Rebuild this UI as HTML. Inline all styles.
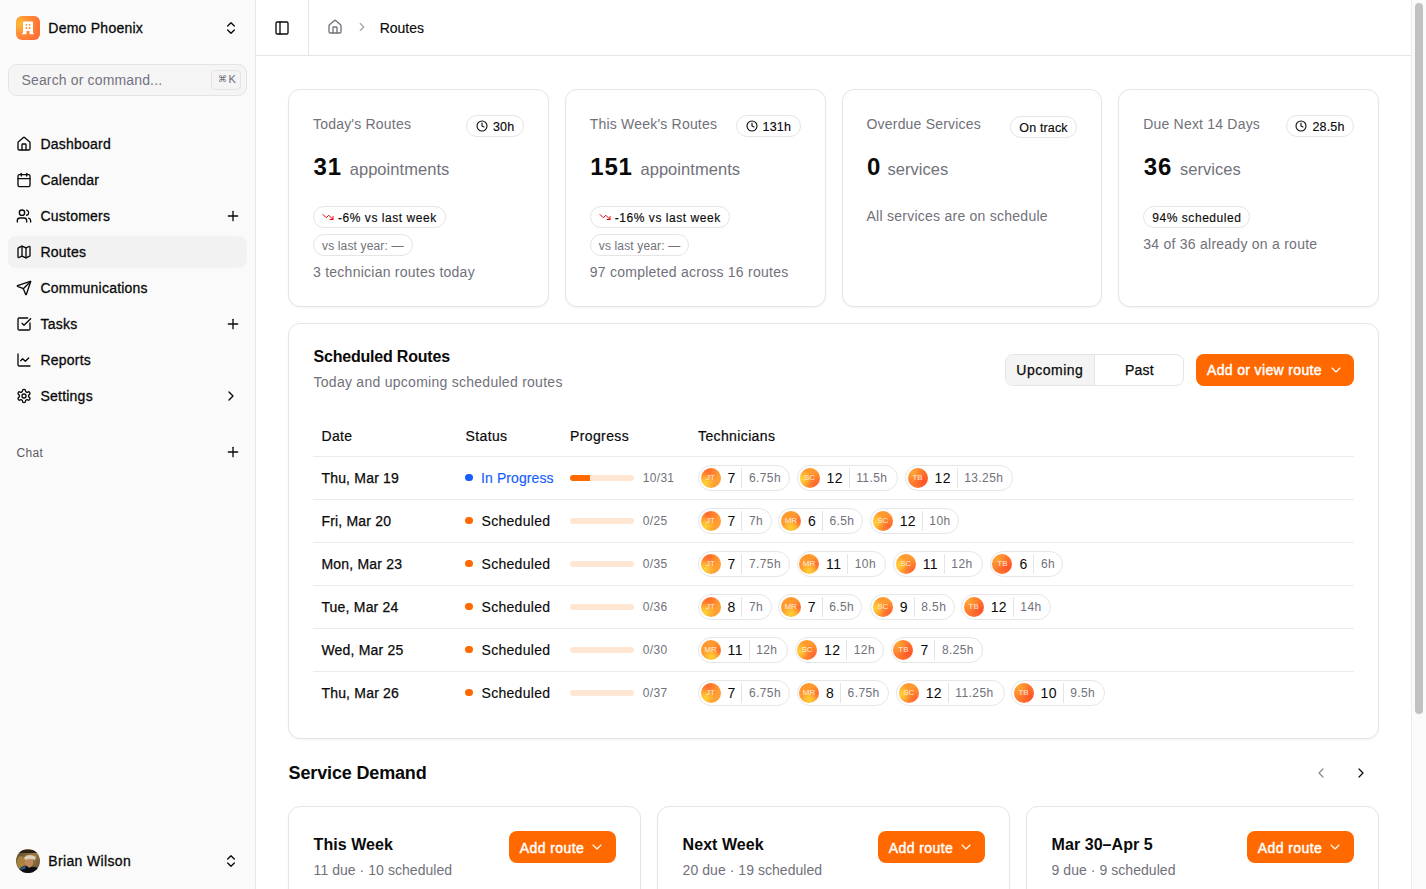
<!DOCTYPE html><html><head><meta charset="utf-8"><style>
*{box-sizing:border-box;margin:0;padding:0}
html,body{width:1426px;height:889px;overflow:hidden;background:#fff}
body{font-family:"Liberation Sans",sans-serif;color:#0a0a0a;position:relative}
.t{position:absolute;white-space:nowrap}
svg.i{position:absolute;fill:none;stroke:currentColor;stroke-linecap:round;stroke-linejoin:round;display:block}
.b{position:absolute}
.card{position:absolute;background:#fff;border:1px solid #e5e5e5;border-radius:12px;box-shadow:0 1px 2px rgba(0,0,0,.05)}
.med{-webkit-text-stroke:0.25px currentColor}
</style></head><body>
<div class="b" style="left:0;top:0;width:256px;height:889px;background:#fafafa;border-right:1px solid #e8e8e8"></div>
<div class="b" style="left:16px;top:16px;width:24px;height:24px;border-radius:6px;background:radial-gradient(circle at 16% 33%,#ffbb34 0%,#ff9236 35%,#ff7236 75%,#ff6a32 100%)"></div>
<svg class="b" style="left:16px;top:16px" width="24" height="24" viewBox="0 0 24 24"><path fill="#fff" d="M8 5.4h8a1 1 0 0 1 1 1V17h.8v1.3h-4.2V16a1.6 1.6 0 0 0-3.2 0v2.3H6.2V17H7V6.4a1 1 0 0 1 1-1z"/><g fill="#ff8c3a"><rect x="9.6" y="7.9" width="1.5" height="1.8" rx=".5"/><rect x="12.8" y="7.9" width="1.5" height="1.8" rx=".5"/><rect x="9.6" y="11.1" width="1.5" height="1.8" rx=".5"/><rect x="12.8" y="11.1" width="1.5" height="1.8" rx=".5"/></g></svg>
<div class="t" style="left:48.30px;top:21.35px;font-size:14px;line-height:14px;font-weight:400;color:#0a0a0a;letter-spacing:0.25px;-webkit-text-stroke:0.3px currentColor">Demo Phoenix</div>
<svg class="i" style="left:223px;top:20px;color:#0a0a0a;" width="16" height="16" viewBox="0 0 24 24" stroke-width="2"><path d="m7 15 5 5 5-5"/><path d="m7 9 5-5 5 5"/></svg>
<div class="b" style="left:8px;top:64px;width:239px;height:32px;border:1px solid #e4e4e7;border-radius:9px;background:#f5f5f5"></div>
<div class="t" style="left:21.50px;top:73.35px;font-size:14px;line-height:14px;font-weight:400;color:#737381;letter-spacing:0.15px;">Search or command...</div>
<div class="b" style="left:211px;top:70px;width:30px;height:20px;border:1px solid #e4e4e7;border-radius:4px;background:#f4f4f5"></div>
<div class="t" style="left:217.60px;top:75.40px;font-size:8.5px;line-height:8.5px;font-weight:400;color:#6b6b78;letter-spacing:0px;">⌘</div>
<div class="t" style="left:228.60px;top:73.69px;font-size:11px;line-height:11px;font-weight:400;color:#6b6b78;letter-spacing:0px;">K</div>
<svg class="i" style="left:16px;top:136px;color:#0a0a0a;" width="16" height="16" viewBox="0 0 24 24" stroke-width="2"><path d="M15 21v-8a1 1 0 0 0-1-1h-4a1 1 0 0 0-1 1v8"/><path d="M3 10a2 2 0 0 1 .709-1.528l7-5.999a2 2 0 0 1 2.582 0l7 5.999A2 2 0 0 1 21 10v9a2 2 0 0 1-2 2H5a2 2 0 0 1-2-2z"/></svg>
<div class="t" style="left:40.50px;top:137.15px;font-size:14px;line-height:14px;font-weight:400;color:#0a0a0a;letter-spacing:0.22px;-webkit-text-stroke:0.3px currentColor">Dashboard</div>
<svg class="i" style="left:16px;top:172px;color:#0a0a0a;" width="16" height="16" viewBox="0 0 24 24" stroke-width="2"><path d="M8 2v4"/><path d="M16 2v4"/><rect width="18" height="18" x="3" y="4" rx="2"/><path d="M3 10h18"/></svg>
<div class="t" style="left:40.50px;top:173.15px;font-size:14px;line-height:14px;font-weight:400;color:#0a0a0a;letter-spacing:0.22px;-webkit-text-stroke:0.3px currentColor">Calendar</div>
<svg class="i" style="left:16px;top:208px;color:#0a0a0a;" width="16" height="16" viewBox="0 0 24 24" stroke-width="2"><path d="M16 21v-2a4 4 0 0 0-4-4H6a4 4 0 0 0-4 4v2"/><circle cx="9" cy="7" r="4"/><path d="M22 21v-2a4 4 0 0 0-3-3.87"/><path d="M16 3.13a4 4 0 0 1 0 7.75"/></svg>
<div class="t" style="left:40.50px;top:209.15px;font-size:14px;line-height:14px;font-weight:400;color:#0a0a0a;letter-spacing:0.22px;-webkit-text-stroke:0.3px currentColor">Customers</div>
<svg class="i" style="left:225px;top:208px;color:#0a0a0a;" width="16" height="16" viewBox="0 0 24 24" stroke-width="2"><path d="M5 12h14"/><path d="M12 5v14"/></svg>
<div class="b" style="left:8px;top:236px;width:239px;height:32px;border-radius:8px;background:#f2f2f2"></div>
<svg class="i" style="left:16px;top:244px;color:#0a0a0a;" width="16" height="16" viewBox="0 0 24 24" stroke-width="2"><path d="M14.106 5.553a2 2 0 0 0 1.788 0l3.659-1.83A1 1 0 0 1 21 4.619v12.764a1 1 0 0 1-.553.894l-4.553 2.277a2 2 0 0 1-1.788 0l-4.212-2.106a2 2 0 0 0-1.788 0l-3.659 1.83A1 1 0 0 1 3 19.381V6.618a1 1 0 0 1 .553-.894l4.553-2.277a2 2 0 0 1 1.788 0z"/><path d="M15 5.764v15"/><path d="M9 3.236v15"/></svg>
<div class="t" style="left:40.50px;top:245.15px;font-size:14px;line-height:14px;font-weight:400;color:#0a0a0a;letter-spacing:0.22px;-webkit-text-stroke:0.3px currentColor">Routes</div>
<svg class="i" style="left:16px;top:280px;color:#0a0a0a;" width="16" height="16" viewBox="0 0 24 24" stroke-width="2"><path d="M14.536 21.686a.5.5 0 0 0 .937-.024l6.5-19a.496.496 0 0 0-.635-.635l-19 6.5a.5.5 0 0 0-.024.937l7.93 3.18a2 2 0 0 1 1.112 1.11z"/><path d="m21.854 2.147-10.94 10.939"/></svg>
<div class="t" style="left:40.50px;top:281.15px;font-size:14px;line-height:14px;font-weight:400;color:#0a0a0a;letter-spacing:0.22px;-webkit-text-stroke:0.3px currentColor">Communications</div>
<svg class="i" style="left:16px;top:316px;color:#0a0a0a;" width="16" height="16" viewBox="0 0 24 24" stroke-width="2"><path d="M21 10.5V19a2 2 0 0 1-2 2H5a2 2 0 0 1-2-2V5a2 2 0 0 1 2-2h12.5"/><path d="m9 11 3 3L22 4"/></svg>
<div class="t" style="left:40.50px;top:317.15px;font-size:14px;line-height:14px;font-weight:400;color:#0a0a0a;letter-spacing:0.22px;-webkit-text-stroke:0.3px currentColor">Tasks</div>
<svg class="i" style="left:225px;top:316px;color:#0a0a0a;" width="16" height="16" viewBox="0 0 24 24" stroke-width="2"><path d="M5 12h14"/><path d="M12 5v14"/></svg>
<svg class="i" style="left:16px;top:352px;color:#0a0a0a;" width="16" height="16" viewBox="0 0 24 24" stroke-width="2"><path d="M3 3v16a2 2 0 0 0 2 2h16"/><path d="m19 9-5 5-4-4-3 3"/></svg>
<div class="t" style="left:40.50px;top:353.15px;font-size:14px;line-height:14px;font-weight:400;color:#0a0a0a;letter-spacing:0.22px;-webkit-text-stroke:0.3px currentColor">Reports</div>
<svg class="i" style="left:16px;top:388px;color:#0a0a0a;" width="16" height="16" viewBox="0 0 24 24" stroke-width="2"><path d="M12.22 2h-.44a2 2 0 0 0-2 2v.18a2 2 0 0 1-1 1.73l-.43.25a2 2 0 0 1-2 0l-.15-.08a2 2 0 0 0-2.73.73l-.22.38a2 2 0 0 0 .73 2.730l.15.1a2 2 0 0 1 1 1.72v.51a2 2 0 0 1-1 1.74l-.15.09a2 2 0 0 0-.73 2.73l.22.38a2 2 0 0 0 2.73.73l.15-.08a2 2 0 0 1 2 0l.43.25a2 2 0 0 1 1 1.73V20a2 2 0 0 0 2 2h.44a2 2 0 0 0 2-2v-.18a2 2 0 0 1 1-1.73l.43-.25a2 2 0 0 1 2 0l.15.08a2 2 0 0 0 2.73-.73l.22-.39a2 2 0 0 0-.73-2.73l-.15-.08a2 2 0 0 1-1-1.74v-.5a2 2 0 0 1 1-1.74l.15-.09a2 2 0 0 0 .73-2.73l-.22-.38a2 2 0 0 0-2.73-.73l-.15.08a2 2 0 0 1-2 0l-.43-.25a2 2 0 0 1-1-1.73V4a2 2 0 0 0-2-2z"/><circle cx="12" cy="12" r="3"/></svg>
<div class="t" style="left:40.50px;top:389.15px;font-size:14px;line-height:14px;font-weight:400;color:#0a0a0a;letter-spacing:0.22px;-webkit-text-stroke:0.3px currentColor">Settings</div>
<svg class="i" style="left:223px;top:388px;color:#0a0a0a;" width="16" height="16" viewBox="0 0 24 24" stroke-width="2"><path d="m9 18 6-6-6-6"/></svg>
<div class="t" style="left:16.50px;top:447.24px;font-size:12px;line-height:12px;font-weight:400;color:#5a5a63;letter-spacing:0.35px;">Chat</div>
<svg class="i" style="left:225px;top:444px;color:#0a0a0a;" width="16" height="16" viewBox="0 0 24 24" stroke-width="2"><path d="M5 12h14"/><path d="M12 5v14"/></svg>
<svg class="b" style="left:16px;top:849px" width="24" height="24" viewBox="0 0 24 24"><defs><clipPath id="av"><circle cx="12" cy="12" r="12"/></clipPath><linearGradient id="avbg" x1="0" y1="0" x2="1" y2="1"><stop offset="0" stop-color="#4a3b24"/><stop offset=".5" stop-color="#9c7a45"/><stop offset="1" stop-color="#5a4a30"/></linearGradient></defs><g clip-path="url(#av)"><rect width="24" height="24" fill="url(#avbg)"/><rect x="0" y="1" width="24" height="3" fill="#2a2418"/><ellipse cx="5" cy="13" rx="4" ry="6" fill="#b08a40" opacity=".8"/><ellipse cx="13" cy="13" rx="4.2" ry="5.2" fill="#c08a5e"/><path d="M8 8.5 Q13 4 20 8 L19 11 Q14 9 9 11z" fill="#ddd0b8"/><path d="M2 22 Q6 16 11 17 L13 19 Q18 16 23 20 L24 24 H0z" fill="#0d0f14"/><path d="M3 21 Q6 17 10 17 L9 20z" fill="#2c5a8a"/></g></svg>
<div class="t" style="left:48.30px;top:854.15px;font-size:14px;line-height:14px;font-weight:400;color:#0a0a0a;letter-spacing:0.35px;-webkit-text-stroke:0.3px currentColor">Brian Wilson</div>
<svg class="i" style="left:223px;top:853px;color:#0a0a0a;" width="16" height="16" viewBox="0 0 24 24" stroke-width="2"><path d="m7 15 5 5 5-5"/><path d="m7 9 5-5 5 5"/></svg>
<div class="b" style="left:256px;top:55px;width:1155px;height:1px;background:#e5e5e5"></div>
<div class="b" style="left:308px;top:0;width:1px;height:55px;background:#e5e5e5"></div>
<svg class="i" style="left:274px;top:19.6px;color:#0a0a0a;" width="16" height="16" viewBox="0 0 24 24" stroke-width="2"><rect width="18" height="18" x="3" y="3" rx="2"/><path d="M9 3v18"/></svg>
<svg class="i" style="left:327px;top:19px;color:#71717a;" width="16" height="16" viewBox="0 0 24 24" stroke-width="2"><path d="M15 21v-8a1 1 0 0 0-1-1h-4a1 1 0 0 0-1 1v8"/><path d="M3 10a2 2 0 0 1 .709-1.528l7-5.999a2 2 0 0 1 2.582 0l7 5.999A2 2 0 0 1 21 10v9a2 2 0 0 1-2 2H5a2 2 0 0 1-2-2z"/></svg>
<svg class="i" style="left:354.5px;top:20.3px;color:#a1a1aa;" width="14" height="14" viewBox="0 0 24 24" stroke-width="2"><path d="m9 18 6-6-6-6"/></svg>
<div class="t" style="left:379.70px;top:21.35px;font-size:14px;line-height:14px;font-weight:400;color:#0a0a0a;letter-spacing:0px;-webkit-text-stroke:0.15px currentColor">Routes</div>
<div class="card" style="left:288.00px;top:89px;width:260.75px;height:218px"></div>
<div class="t" style="left:313.00px;top:116.95px;font-size:14px;line-height:14px;font-weight:400;color:#71717a;letter-spacing:0.2px;">Today's Routes</div>
<div class="b" id="badge0" style="right:902.25px;top:115px;height:22px;border:1px solid #e5e5e5;border-radius:11px;background:#fff;display:flex;align-items:center;padding:0 8.5px;white-space:nowrap;font-size:12.5px;line-height:12px;font-weight:400;color:#0a0a0a;letter-spacing:0.15px"><svg width="12" height="12" viewBox="0 0 24 24" style="fill:none;stroke:#0a0a0a;stroke-width:2.2;stroke-linecap:round;stroke-linejoin:round;margin-right:5px;flex:none"><circle cx="12" cy="12" r="10"/><path d="M12 6v6l4 2"/></svg><span style="-webkit-text-stroke:0.15px #0a0a0a;position:relative;top:1px">30h</span></div>
<div class="t" style="left:313.60px;top:154.88px;font-size:24px;line-height:24px;font-weight:700;color:#0a0a0a;letter-spacing:0.7px;">31</div>
<div class="t" style="left:349.70px;top:161.23px;font-size:16.5px;line-height:16.5px;font-weight:400;color:#71717a;letter-spacing:0.05px;">appointments</div>
<div class="b" style="left:313.00px;top:206px;height:22px;border:1px solid #e5e5e5;border-radius:11px;background:#fff;display:flex;align-items:center;padding:0 8px;white-space:nowrap;font-size:12px;color:#0a0a0a;letter-spacing:0.55px"><svg width="12" height="12" viewBox="0 0 24 24" style="fill:none;stroke:#e7000b;stroke-width:2;stroke-linecap:round;stroke-linejoin:round;margin-right:4px;flex:none"><path d="M16 17h6v-6"/><path d="m22 17-8.5-8.5-5 5L2 7"/></svg><span style="-webkit-text-stroke:0.15px currentColor;position:relative;top:0.8px">-6% vs last week</span></div>
<div class="b" style="left:313.00px;top:234px;height:22px;border:1px solid #e5e5e5;border-radius:11px;background:#fff;display:flex;align-items:center;padding:0 8px;white-space:nowrap;font-size:12px;color:#71717a;letter-spacing:0.15px"><span style=";position:relative;top:0.8px">vs last year: —</span></div>
<div class="t" style="left:313.00px;top:264.85px;font-size:14px;line-height:14px;font-weight:400;color:#71717a;letter-spacing:0.25px;">3 technician routes today</div>
<div class="card" style="left:564.75px;top:89px;width:260.75px;height:218px"></div>
<div class="t" style="left:589.75px;top:116.95px;font-size:14px;line-height:14px;font-weight:400;color:#71717a;letter-spacing:0.2px;">This Week's Routes</div>
<div class="b" id="badge1" style="right:625.50px;top:115px;height:22px;border:1px solid #e5e5e5;border-radius:11px;background:#fff;display:flex;align-items:center;padding:0 8.5px;white-space:nowrap;font-size:12.5px;line-height:12px;font-weight:400;color:#0a0a0a;letter-spacing:0.15px"><svg width="12" height="12" viewBox="0 0 24 24" style="fill:none;stroke:#0a0a0a;stroke-width:2.2;stroke-linecap:round;stroke-linejoin:round;margin-right:5px;flex:none"><circle cx="12" cy="12" r="10"/><path d="M12 6v6l4 2"/></svg><span style="-webkit-text-stroke:0.15px #0a0a0a;position:relative;top:1px">131h</span></div>
<div class="t" style="left:590.35px;top:154.88px;font-size:24px;line-height:24px;font-weight:700;color:#0a0a0a;letter-spacing:0.7px;">151</div>
<div class="t" style="left:640.45px;top:161.23px;font-size:16.5px;line-height:16.5px;font-weight:400;color:#71717a;letter-spacing:0.05px;">appointments</div>
<div class="b" style="left:589.75px;top:206px;height:22px;border:1px solid #e5e5e5;border-radius:11px;background:#fff;display:flex;align-items:center;padding:0 8px;white-space:nowrap;font-size:12px;color:#0a0a0a;letter-spacing:0.55px"><svg width="12" height="12" viewBox="0 0 24 24" style="fill:none;stroke:#e7000b;stroke-width:2;stroke-linecap:round;stroke-linejoin:round;margin-right:4px;flex:none"><path d="M16 17h6v-6"/><path d="m22 17-8.5-8.5-5 5L2 7"/></svg><span style="-webkit-text-stroke:0.15px currentColor;position:relative;top:0.8px">-16% vs last week</span></div>
<div class="b" style="left:589.75px;top:234px;height:22px;border:1px solid #e5e5e5;border-radius:11px;background:#fff;display:flex;align-items:center;padding:0 8px;white-space:nowrap;font-size:12px;color:#71717a;letter-spacing:0.15px"><span style=";position:relative;top:0.8px">vs last year: —</span></div>
<div class="t" style="left:589.75px;top:264.85px;font-size:14px;line-height:14px;font-weight:400;color:#71717a;letter-spacing:0.25px;">97 completed across 16 routes</div>
<div class="card" style="left:841.50px;top:89px;width:260.75px;height:218px"></div>
<div class="t" style="left:866.50px;top:116.95px;font-size:14px;line-height:14px;font-weight:400;color:#71717a;letter-spacing:0.2px;">Overdue Services</div>
<div class="b" id="badge2" style="right:348.75px;top:116px;height:22px;border:1px solid #e5e5e5;border-radius:11px;background:#fff;display:flex;align-items:center;padding:0 8.5px;white-space:nowrap;font-size:12.5px;line-height:12px;font-weight:400;color:#0a0a0a;letter-spacing:0.15px"><span style="-webkit-text-stroke:0.15px #0a0a0a;position:relative;top:1px">On track</span></div>
<div class="t" style="left:867.10px;top:154.88px;font-size:24px;line-height:24px;font-weight:700;color:#0a0a0a;letter-spacing:0.7px;">0</div>
<div class="t" style="left:887.40px;top:161.23px;font-size:16.5px;line-height:16.5px;font-weight:400;color:#71717a;letter-spacing:0.05px;">services</div>
<div class="t" style="left:866.50px;top:208.75px;font-size:14px;line-height:14px;font-weight:400;color:#71717a;letter-spacing:0.25px;">All services are on schedule</div>
<div class="card" style="left:1118.25px;top:89px;width:260.75px;height:218px"></div>
<div class="t" style="left:1143.25px;top:116.95px;font-size:14px;line-height:14px;font-weight:400;color:#71717a;letter-spacing:0.2px;">Due Next 14 Days</div>
<div class="b" id="badge3" style="right:72.00px;top:115px;height:22px;border:1px solid #e5e5e5;border-radius:11px;background:#fff;display:flex;align-items:center;padding:0 8.5px;white-space:nowrap;font-size:12.5px;line-height:12px;font-weight:400;color:#0a0a0a;letter-spacing:0.15px"><svg width="12" height="12" viewBox="0 0 24 24" style="fill:none;stroke:#0a0a0a;stroke-width:2.2;stroke-linecap:round;stroke-linejoin:round;margin-right:5px;flex:none"><circle cx="12" cy="12" r="10"/><path d="M12 6v6l4 2"/></svg><span style="-webkit-text-stroke:0.15px #0a0a0a;position:relative;top:1px">28.5h</span></div>
<div class="t" style="left:1143.85px;top:154.88px;font-size:24px;line-height:24px;font-weight:700;color:#0a0a0a;letter-spacing:0.7px;">36</div>
<div class="t" style="left:1179.95px;top:161.23px;font-size:16.5px;line-height:16.5px;font-weight:400;color:#71717a;letter-spacing:0.05px;">services</div>
<div class="b" style="left:1143.25px;top:206px;height:22px;border:1px solid #e5e5e5;border-radius:11px;background:#fff;display:flex;align-items:center;padding:0 8px;white-space:nowrap;font-size:12px;color:#0a0a0a;letter-spacing:0.55px"><span style="-webkit-text-stroke:0.15px currentColor;position:relative;top:0.8px">94% scheduled</span></div>
<div class="t" style="left:1143.25px;top:237.15px;font-size:14px;line-height:14px;font-weight:400;color:#71717a;letter-spacing:0.25px;">34 of 36 already on a route</div>
<div class="card" style="left:288px;top:323px;width:1091px;height:416px"></div>
<div class="t" style="left:313.50px;top:348.86px;font-size:16px;line-height:16px;font-weight:700;color:#0a0a0a;letter-spacing:-0.2px;">Scheduled Routes</div>
<div class="t" style="left:313.50px;top:375.25px;font-size:14px;line-height:14px;font-weight:400;color:#71717a;letter-spacing:0.27px;">Today and upcoming scheduled routes</div>
<div class="b" style="left:1005px;top:354px;width:179px;height:32px;border:1px solid #e5e5e5;border-radius:8px;background:#fff;overflow:hidden"><div style="position:absolute;left:0;top:0;width:89px;height:30px;background:#f4f4f4;border-right:1px solid #e5e5e5"></div></div>
<div class="t" style="left:1016.30px;top:363.15px;font-size:14px;line-height:14px;font-weight:400;color:#0a0a0a;letter-spacing:0.5px;-webkit-text-stroke:0.25px #0a0a0a">Upcoming</div>
<div class="t" style="left:1125.00px;top:363.15px;font-size:14px;line-height:14px;font-weight:400;color:#0a0a0a;letter-spacing:0.25px;-webkit-text-stroke:0.25px #0a0a0a">Past</div>
<div class="b" style="left:1196px;top:354px;width:158px;height:32px;border-radius:8px;background:#ff6900"></div>
<div class="t" style="left:1207.00px;top:363.15px;font-size:14px;line-height:14px;font-weight:400;color:#fff;letter-spacing:0.35px;-webkit-text-stroke:0.45px #fff">Add or view route</div>
<svg class="i" style="left:1328px;top:362px;color:#fff;" width="16" height="16" viewBox="0 0 24 24" stroke-width="1.6"><path d="m6 9 6 6 6-6"/></svg>
<div class="t" style="left:321.40px;top:429.15px;font-size:14px;line-height:14px;font-weight:400;color:#0a0a0a;letter-spacing:0.38px;-webkit-text-stroke:0.2px #0a0a0a">Date</div>
<div class="t" style="left:465.50px;top:429.15px;font-size:14px;line-height:14px;font-weight:400;color:#0a0a0a;letter-spacing:0.38px;-webkit-text-stroke:0.2px #0a0a0a">Status</div>
<div class="t" style="left:570.00px;top:429.15px;font-size:14px;line-height:14px;font-weight:400;color:#0a0a0a;letter-spacing:0.38px;-webkit-text-stroke:0.2px #0a0a0a">Progress</div>
<div class="t" style="left:698.00px;top:429.15px;font-size:14px;line-height:14px;font-weight:400;color:#0a0a0a;letter-spacing:0.38px;-webkit-text-stroke:0.2px #0a0a0a">Technicians</div>
<div class="b" style="left:313px;top:456px;width:1041px;height:1px;background:#ebebeb"></div>
<div class="t" style="left:321.40px;top:471.15px;font-size:14px;line-height:14px;font-weight:400;color:#0a0a0a;letter-spacing:0.2px;-webkit-text-stroke:0.25px #0a0a0a">Thu, Mar 19</div>
<div class="b" style="left:465px;top:473.65px;width:7.5px;height:7.5px;border-radius:50%;background:#155dfc"></div>
<div class="t" style="left:481.10px;top:471.15px;font-size:14px;line-height:14px;font-weight:400;color:#155dfc;letter-spacing:0.08px;-webkit-text-stroke:0.15px currentColor">In Progress</div>
<div class="b" style="left:569.5px;top:474.60px;width:64px;height:6px;border-radius:3px;background:#ffe6d2;overflow:hidden"><div style="width:20.65px;height:6px;background:#ff6900"></div></div>
<div class="t" style="left:642.80px;top:472.34px;font-size:12px;line-height:12px;font-weight:400;color:#71717a;letter-spacing:0.3px;">10/31</div>
<div class="b" style="left:698.0px;top:464.80px;width:92.0px;height:26px;border:1px solid #e6e6e6;border-radius:13px;background:#fff;display:flex;align-items:center;padding:0 0 0 1.5px;white-space:nowrap"><div style="width:20px;height:20px;border-radius:50%;background:radial-gradient(circle at 22% 75%,#ffd234 0%,rgba(255,210,52,0) 45%),radial-gradient(circle at 35% 12%,#ff6a2c 0%,rgba(255,106,44,0) 55%),#ff9e32;color:rgba(255,255,255,.85);font-size:8px;line-height:20px;text-align:center;flex:none">JT</div><span style="margin-left:7px;font-size:14px;line-height:14px;color:#0a0a0a;letter-spacing:0.4px">7</span><span style="margin:0 6.5px 0 5.8px;width:1px;height:20px;background:#e5e5e5;flex:none"></span><span style="font-size:12px;line-height:12px;color:#71717a;letter-spacing:0.4px">6.75h</span></div>
<div class="b" style="left:797.0px;top:464.80px;width:100.7px;height:26px;border:1px solid #e6e6e6;border-radius:13px;background:#fff;display:flex;align-items:center;padding:0 0 0 1.5px;white-space:nowrap"><div style="width:20px;height:20px;border-radius:50%;background:radial-gradient(circle at 12% 55%,#ffd234 0%,rgba(255,210,52,0) 45%),radial-gradient(circle at 88% 82%,#ff6030 0%,rgba(255,96,48,0) 55%),#ff9a2e;color:rgba(255,255,255,.85);font-size:8px;line-height:20px;text-align:center;flex:none">SC</div><span style="margin-left:7px;font-size:14px;line-height:14px;color:#0a0a0a;letter-spacing:0.4px">12</span><span style="margin:0 6.5px 0 5.8px;width:1px;height:20px;background:#e5e5e5;flex:none"></span><span style="font-size:12px;line-height:12px;color:#71717a;letter-spacing:0.4px">11.5h</span></div>
<div class="b" style="left:905.0px;top:464.80px;width:108.0px;height:26px;border:1px solid #e6e6e6;border-radius:13px;background:#fff;display:flex;align-items:center;padding:0 0 0 1.5px;white-space:nowrap"><div style="width:20px;height:20px;border-radius:50%;background:radial-gradient(circle at 22% 22%,#ffa634 0%,rgba(255,166,52,0) 50%),radial-gradient(circle at 85% 70%,#ff5228 0%,rgba(255,82,40,0) 55%),#ff7a2e;color:rgba(255,255,255,.85);font-size:8px;line-height:20px;text-align:center;flex:none">TB</div><span style="margin-left:7px;font-size:14px;line-height:14px;color:#0a0a0a;letter-spacing:0.4px">12</span><span style="margin:0 6.5px 0 5.8px;width:1px;height:20px;background:#e5e5e5;flex:none"></span><span style="font-size:12px;line-height:12px;color:#71717a;letter-spacing:0.4px">13.25h</span></div>
<div class="b" style="left:313px;top:499px;width:1041px;height:1px;background:#ebebeb"></div>
<div class="t" style="left:321.40px;top:514.15px;font-size:14px;line-height:14px;font-weight:400;color:#0a0a0a;letter-spacing:0.2px;-webkit-text-stroke:0.25px #0a0a0a">Fri, Mar 20</div>
<div class="b" style="left:465px;top:516.65px;width:7.5px;height:7.5px;border-radius:50%;background:#ff6900"></div>
<div class="t" style="left:481.50px;top:514.15px;font-size:14px;line-height:14px;font-weight:400;color:#0a0a0a;letter-spacing:0.3px;-webkit-text-stroke:0.15px #0a0a0a">Scheduled</div>
<div class="b" style="left:569.5px;top:517.60px;width:64px;height:6px;border-radius:3px;background:#ffe6d2;overflow:hidden"><div style="width:0.00px;height:6px;background:#ff6900"></div></div>
<div class="t" style="left:642.80px;top:515.34px;font-size:12px;line-height:12px;font-weight:400;color:#71717a;letter-spacing:0.3px;">0/25</div>
<div class="b" style="left:698.0px;top:507.80px;width:73.5px;height:26px;border:1px solid #e6e6e6;border-radius:13px;background:#fff;display:flex;align-items:center;padding:0 0 0 1.5px;white-space:nowrap"><div style="width:20px;height:20px;border-radius:50%;background:radial-gradient(circle at 22% 75%,#ffd234 0%,rgba(255,210,52,0) 45%),radial-gradient(circle at 35% 12%,#ff6a2c 0%,rgba(255,106,44,0) 55%),#ff9e32;color:rgba(255,255,255,.85);font-size:8px;line-height:20px;text-align:center;flex:none">JT</div><span style="margin-left:7px;font-size:14px;line-height:14px;color:#0a0a0a;letter-spacing:0.4px">7</span><span style="margin:0 6.5px 0 5.8px;width:1px;height:20px;background:#e5e5e5;flex:none"></span><span style="font-size:12px;line-height:12px;color:#71717a;letter-spacing:0.4px">7h</span></div>
<div class="b" style="left:778.4px;top:507.80px;width:84.4px;height:26px;border:1px solid #e6e6e6;border-radius:13px;background:#fff;display:flex;align-items:center;padding:0 0 0 1.5px;white-space:nowrap"><div style="width:20px;height:20px;border-radius:50%;background:radial-gradient(circle at 50% 85%,#ffd234 0%,rgba(255,210,52,0) 45%),radial-gradient(circle at 92% 50%,#ff6e30 0%,rgba(255,110,48,0) 40%),#ff9a2e;color:rgba(255,255,255,.85);font-size:8px;line-height:20px;text-align:center;flex:none">MR</div><span style="margin-left:7px;font-size:14px;line-height:14px;color:#0a0a0a;letter-spacing:0.4px">6</span><span style="margin:0 6.5px 0 5.8px;width:1px;height:20px;background:#e5e5e5;flex:none"></span><span style="font-size:12px;line-height:12px;color:#71717a;letter-spacing:0.4px">6.5h</span></div>
<div class="b" style="left:870.2px;top:507.80px;width:89.2px;height:26px;border:1px solid #e6e6e6;border-radius:13px;background:#fff;display:flex;align-items:center;padding:0 0 0 1.5px;white-space:nowrap"><div style="width:20px;height:20px;border-radius:50%;background:radial-gradient(circle at 12% 55%,#ffd234 0%,rgba(255,210,52,0) 45%),radial-gradient(circle at 88% 82%,#ff6030 0%,rgba(255,96,48,0) 55%),#ff9a2e;color:rgba(255,255,255,.85);font-size:8px;line-height:20px;text-align:center;flex:none">SC</div><span style="margin-left:7px;font-size:14px;line-height:14px;color:#0a0a0a;letter-spacing:0.4px">12</span><span style="margin:0 6.5px 0 5.8px;width:1px;height:20px;background:#e5e5e5;flex:none"></span><span style="font-size:12px;line-height:12px;color:#71717a;letter-spacing:0.4px">10h</span></div>
<div class="b" style="left:313px;top:542px;width:1041px;height:1px;background:#ebebeb"></div>
<div class="t" style="left:321.40px;top:557.15px;font-size:14px;line-height:14px;font-weight:400;color:#0a0a0a;letter-spacing:0.2px;-webkit-text-stroke:0.25px #0a0a0a">Mon, Mar 23</div>
<div class="b" style="left:465px;top:559.65px;width:7.5px;height:7.5px;border-radius:50%;background:#ff6900"></div>
<div class="t" style="left:481.50px;top:557.15px;font-size:14px;line-height:14px;font-weight:400;color:#0a0a0a;letter-spacing:0.3px;-webkit-text-stroke:0.15px #0a0a0a">Scheduled</div>
<div class="b" style="left:569.5px;top:560.60px;width:64px;height:6px;border-radius:3px;background:#ffe6d2;overflow:hidden"><div style="width:0.00px;height:6px;background:#ff6900"></div></div>
<div class="t" style="left:642.80px;top:558.34px;font-size:12px;line-height:12px;font-weight:400;color:#71717a;letter-spacing:0.3px;">0/35</div>
<div class="b" style="left:698.0px;top:550.80px;width:92.1px;height:26px;border:1px solid #e6e6e6;border-radius:13px;background:#fff;display:flex;align-items:center;padding:0 0 0 1.5px;white-space:nowrap"><div style="width:20px;height:20px;border-radius:50%;background:radial-gradient(circle at 22% 75%,#ffd234 0%,rgba(255,210,52,0) 45%),radial-gradient(circle at 35% 12%,#ff6a2c 0%,rgba(255,106,44,0) 55%),#ff9e32;color:rgba(255,255,255,.85);font-size:8px;line-height:20px;text-align:center;flex:none">JT</div><span style="margin-left:7px;font-size:14px;line-height:14px;color:#0a0a0a;letter-spacing:0.4px">7</span><span style="margin:0 6.5px 0 5.8px;width:1px;height:20px;background:#e5e5e5;flex:none"></span><span style="font-size:12px;line-height:12px;color:#71717a;letter-spacing:0.4px">7.75h</span></div>
<div class="b" style="left:796.6px;top:550.80px;width:89.9px;height:26px;border:1px solid #e6e6e6;border-radius:13px;background:#fff;display:flex;align-items:center;padding:0 0 0 1.5px;white-space:nowrap"><div style="width:20px;height:20px;border-radius:50%;background:radial-gradient(circle at 50% 85%,#ffd234 0%,rgba(255,210,52,0) 45%),radial-gradient(circle at 92% 50%,#ff6e30 0%,rgba(255,110,48,0) 40%),#ff9a2e;color:rgba(255,255,255,.85);font-size:8px;line-height:20px;text-align:center;flex:none">MR</div><span style="margin-left:7px;font-size:14px;line-height:14px;color:#0a0a0a;letter-spacing:0.4px">11</span><span style="margin:0 6.5px 0 5.8px;width:1px;height:20px;background:#e5e5e5;flex:none"></span><span style="font-size:12px;line-height:12px;color:#71717a;letter-spacing:0.4px">10h</span></div>
<div class="b" style="left:893.2px;top:550.80px;width:89.8px;height:26px;border:1px solid #e6e6e6;border-radius:13px;background:#fff;display:flex;align-items:center;padding:0 0 0 1.5px;white-space:nowrap"><div style="width:20px;height:20px;border-radius:50%;background:radial-gradient(circle at 12% 55%,#ffd234 0%,rgba(255,210,52,0) 45%),radial-gradient(circle at 88% 82%,#ff6030 0%,rgba(255,96,48,0) 55%),#ff9a2e;color:rgba(255,255,255,.85);font-size:8px;line-height:20px;text-align:center;flex:none">SC</div><span style="margin-left:7px;font-size:14px;line-height:14px;color:#0a0a0a;letter-spacing:0.4px">11</span><span style="margin:0 6.5px 0 5.8px;width:1px;height:20px;background:#e5e5e5;flex:none"></span><span style="font-size:12px;line-height:12px;color:#71717a;letter-spacing:0.4px">12h</span></div>
<div class="b" style="left:989.9px;top:550.80px;width:73.6px;height:26px;border:1px solid #e6e6e6;border-radius:13px;background:#fff;display:flex;align-items:center;padding:0 0 0 1.5px;white-space:nowrap"><div style="width:20px;height:20px;border-radius:50%;background:radial-gradient(circle at 22% 22%,#ffa634 0%,rgba(255,166,52,0) 50%),radial-gradient(circle at 85% 70%,#ff5228 0%,rgba(255,82,40,0) 55%),#ff7a2e;color:rgba(255,255,255,.85);font-size:8px;line-height:20px;text-align:center;flex:none">TB</div><span style="margin-left:7px;font-size:14px;line-height:14px;color:#0a0a0a;letter-spacing:0.4px">6</span><span style="margin:0 6.5px 0 5.8px;width:1px;height:20px;background:#e5e5e5;flex:none"></span><span style="font-size:12px;line-height:12px;color:#71717a;letter-spacing:0.4px">6h</span></div>
<div class="b" style="left:313px;top:585px;width:1041px;height:1px;background:#ebebeb"></div>
<div class="t" style="left:321.40px;top:600.15px;font-size:14px;line-height:14px;font-weight:400;color:#0a0a0a;letter-spacing:0.2px;-webkit-text-stroke:0.25px #0a0a0a">Tue, Mar 24</div>
<div class="b" style="left:465px;top:602.65px;width:7.5px;height:7.5px;border-radius:50%;background:#ff6900"></div>
<div class="t" style="left:481.50px;top:600.15px;font-size:14px;line-height:14px;font-weight:400;color:#0a0a0a;letter-spacing:0.3px;-webkit-text-stroke:0.15px #0a0a0a">Scheduled</div>
<div class="b" style="left:569.5px;top:603.60px;width:64px;height:6px;border-radius:3px;background:#ffe6d2;overflow:hidden"><div style="width:0.00px;height:6px;background:#ff6900"></div></div>
<div class="t" style="left:642.80px;top:601.34px;font-size:12px;line-height:12px;font-weight:400;color:#71717a;letter-spacing:0.3px;">0/36</div>
<div class="b" style="left:698.0px;top:593.80px;width:73.7px;height:26px;border:1px solid #e6e6e6;border-radius:13px;background:#fff;display:flex;align-items:center;padding:0 0 0 1.5px;white-space:nowrap"><div style="width:20px;height:20px;border-radius:50%;background:radial-gradient(circle at 22% 75%,#ffd234 0%,rgba(255,210,52,0) 45%),radial-gradient(circle at 35% 12%,#ff6a2c 0%,rgba(255,106,44,0) 55%),#ff9e32;color:rgba(255,255,255,.85);font-size:8px;line-height:20px;text-align:center;flex:none">JT</div><span style="margin-left:7px;font-size:14px;line-height:14px;color:#0a0a0a;letter-spacing:0.4px">8</span><span style="margin:0 6.5px 0 5.8px;width:1px;height:20px;background:#e5e5e5;flex:none"></span><span style="font-size:12px;line-height:12px;color:#71717a;letter-spacing:0.4px">7h</span></div>
<div class="b" style="left:778.2px;top:593.80px;width:84.3px;height:26px;border:1px solid #e6e6e6;border-radius:13px;background:#fff;display:flex;align-items:center;padding:0 0 0 1.5px;white-space:nowrap"><div style="width:20px;height:20px;border-radius:50%;background:radial-gradient(circle at 50% 85%,#ffd234 0%,rgba(255,210,52,0) 45%),radial-gradient(circle at 92% 50%,#ff6e30 0%,rgba(255,110,48,0) 40%),#ff9a2e;color:rgba(255,255,255,.85);font-size:8px;line-height:20px;text-align:center;flex:none">MR</div><span style="margin-left:7px;font-size:14px;line-height:14px;color:#0a0a0a;letter-spacing:0.4px">7</span><span style="margin:0 6.5px 0 5.8px;width:1px;height:20px;background:#e5e5e5;flex:none"></span><span style="font-size:12px;line-height:12px;color:#71717a;letter-spacing:0.4px">6.5h</span></div>
<div class="b" style="left:870.3px;top:593.80px;width:84.4px;height:26px;border:1px solid #e6e6e6;border-radius:13px;background:#fff;display:flex;align-items:center;padding:0 0 0 1.5px;white-space:nowrap"><div style="width:20px;height:20px;border-radius:50%;background:radial-gradient(circle at 12% 55%,#ffd234 0%,rgba(255,210,52,0) 45%),radial-gradient(circle at 88% 82%,#ff6030 0%,rgba(255,96,48,0) 55%),#ff9a2e;color:rgba(255,255,255,.85);font-size:8px;line-height:20px;text-align:center;flex:none">SC</div><span style="margin-left:7px;font-size:14px;line-height:14px;color:#0a0a0a;letter-spacing:0.4px">9</span><span style="margin:0 6.5px 0 5.8px;width:1px;height:20px;background:#e5e5e5;flex:none"></span><span style="font-size:12px;line-height:12px;color:#71717a;letter-spacing:0.4px">8.5h</span></div>
<div class="b" style="left:961.2px;top:593.80px;width:90.0px;height:26px;border:1px solid #e6e6e6;border-radius:13px;background:#fff;display:flex;align-items:center;padding:0 0 0 1.5px;white-space:nowrap"><div style="width:20px;height:20px;border-radius:50%;background:radial-gradient(circle at 22% 22%,#ffa634 0%,rgba(255,166,52,0) 50%),radial-gradient(circle at 85% 70%,#ff5228 0%,rgba(255,82,40,0) 55%),#ff7a2e;color:rgba(255,255,255,.85);font-size:8px;line-height:20px;text-align:center;flex:none">TB</div><span style="margin-left:7px;font-size:14px;line-height:14px;color:#0a0a0a;letter-spacing:0.4px">12</span><span style="margin:0 6.5px 0 5.8px;width:1px;height:20px;background:#e5e5e5;flex:none"></span><span style="font-size:12px;line-height:12px;color:#71717a;letter-spacing:0.4px">14h</span></div>
<div class="b" style="left:313px;top:628px;width:1041px;height:1px;background:#ebebeb"></div>
<div class="t" style="left:321.40px;top:643.15px;font-size:14px;line-height:14px;font-weight:400;color:#0a0a0a;letter-spacing:0.2px;-webkit-text-stroke:0.25px #0a0a0a">Wed, Mar 25</div>
<div class="b" style="left:465px;top:645.65px;width:7.5px;height:7.5px;border-radius:50%;background:#ff6900"></div>
<div class="t" style="left:481.50px;top:643.15px;font-size:14px;line-height:14px;font-weight:400;color:#0a0a0a;letter-spacing:0.3px;-webkit-text-stroke:0.15px #0a0a0a">Scheduled</div>
<div class="b" style="left:569.5px;top:646.60px;width:64px;height:6px;border-radius:3px;background:#ffe6d2;overflow:hidden"><div style="width:0.00px;height:6px;background:#ff6900"></div></div>
<div class="t" style="left:642.80px;top:644.34px;font-size:12px;line-height:12px;font-weight:400;color:#71717a;letter-spacing:0.3px;">0/30</div>
<div class="b" style="left:698.0px;top:636.80px;width:89.8px;height:26px;border:1px solid #e6e6e6;border-radius:13px;background:#fff;display:flex;align-items:center;padding:0 0 0 1.5px;white-space:nowrap"><div style="width:20px;height:20px;border-radius:50%;background:radial-gradient(circle at 50% 85%,#ffd234 0%,rgba(255,210,52,0) 45%),radial-gradient(circle at 92% 50%,#ff6e30 0%,rgba(255,110,48,0) 40%),#ff9a2e;color:rgba(255,255,255,.85);font-size:8px;line-height:20px;text-align:center;flex:none">MR</div><span style="margin-left:7px;font-size:14px;line-height:14px;color:#0a0a0a;letter-spacing:0.4px">11</span><span style="margin:0 6.5px 0 5.8px;width:1px;height:20px;background:#e5e5e5;flex:none"></span><span style="font-size:12px;line-height:12px;color:#71717a;letter-spacing:0.4px">12h</span></div>
<div class="b" style="left:794.6px;top:636.80px;width:89.8px;height:26px;border:1px solid #e6e6e6;border-radius:13px;background:#fff;display:flex;align-items:center;padding:0 0 0 1.5px;white-space:nowrap"><div style="width:20px;height:20px;border-radius:50%;background:radial-gradient(circle at 12% 55%,#ffd234 0%,rgba(255,210,52,0) 45%),radial-gradient(circle at 88% 82%,#ff6030 0%,rgba(255,96,48,0) 55%),#ff9a2e;color:rgba(255,255,255,.85);font-size:8px;line-height:20px;text-align:center;flex:none">SC</div><span style="margin-left:7px;font-size:14px;line-height:14px;color:#0a0a0a;letter-spacing:0.4px">12</span><span style="margin:0 6.5px 0 5.8px;width:1px;height:20px;background:#e5e5e5;flex:none"></span><span style="font-size:12px;line-height:12px;color:#71717a;letter-spacing:0.4px">12h</span></div>
<div class="b" style="left:890.9px;top:636.80px;width:92.2px;height:26px;border:1px solid #e6e6e6;border-radius:13px;background:#fff;display:flex;align-items:center;padding:0 0 0 1.5px;white-space:nowrap"><div style="width:20px;height:20px;border-radius:50%;background:radial-gradient(circle at 22% 22%,#ffa634 0%,rgba(255,166,52,0) 50%),radial-gradient(circle at 85% 70%,#ff5228 0%,rgba(255,82,40,0) 55%),#ff7a2e;color:rgba(255,255,255,.85);font-size:8px;line-height:20px;text-align:center;flex:none">TB</div><span style="margin-left:7px;font-size:14px;line-height:14px;color:#0a0a0a;letter-spacing:0.4px">7</span><span style="margin:0 6.5px 0 5.8px;width:1px;height:20px;background:#e5e5e5;flex:none"></span><span style="font-size:12px;line-height:12px;color:#71717a;letter-spacing:0.4px">8.25h</span></div>
<div class="b" style="left:313px;top:671px;width:1041px;height:1px;background:#ebebeb"></div>
<div class="t" style="left:321.40px;top:686.15px;font-size:14px;line-height:14px;font-weight:400;color:#0a0a0a;letter-spacing:0.2px;-webkit-text-stroke:0.25px #0a0a0a">Thu, Mar 26</div>
<div class="b" style="left:465px;top:688.65px;width:7.5px;height:7.5px;border-radius:50%;background:#ff6900"></div>
<div class="t" style="left:481.50px;top:686.15px;font-size:14px;line-height:14px;font-weight:400;color:#0a0a0a;letter-spacing:0.3px;-webkit-text-stroke:0.15px #0a0a0a">Scheduled</div>
<div class="b" style="left:569.5px;top:689.60px;width:64px;height:6px;border-radius:3px;background:#ffe6d2;overflow:hidden"><div style="width:0.00px;height:6px;background:#ff6900"></div></div>
<div class="t" style="left:642.80px;top:687.34px;font-size:12px;line-height:12px;font-weight:400;color:#71717a;letter-spacing:0.3px;">0/37</div>
<div class="b" style="left:698.0px;top:679.80px;width:92.1px;height:26px;border:1px solid #e6e6e6;border-radius:13px;background:#fff;display:flex;align-items:center;padding:0 0 0 1.5px;white-space:nowrap"><div style="width:20px;height:20px;border-radius:50%;background:radial-gradient(circle at 22% 75%,#ffd234 0%,rgba(255,210,52,0) 45%),radial-gradient(circle at 35% 12%,#ff6a2c 0%,rgba(255,106,44,0) 55%),#ff9e32;color:rgba(255,255,255,.85);font-size:8px;line-height:20px;text-align:center;flex:none">JT</div><span style="margin-left:7px;font-size:14px;line-height:14px;color:#0a0a0a;letter-spacing:0.4px">7</span><span style="margin:0 6.5px 0 5.8px;width:1px;height:20px;background:#e5e5e5;flex:none"></span><span style="font-size:12px;line-height:12px;color:#71717a;letter-spacing:0.4px">6.75h</span></div>
<div class="b" style="left:796.6px;top:679.80px;width:92.8px;height:26px;border:1px solid #e6e6e6;border-radius:13px;background:#fff;display:flex;align-items:center;padding:0 0 0 1.5px;white-space:nowrap"><div style="width:20px;height:20px;border-radius:50%;background:radial-gradient(circle at 50% 85%,#ffd234 0%,rgba(255,210,52,0) 45%),radial-gradient(circle at 92% 50%,#ff6e30 0%,rgba(255,110,48,0) 40%),#ff9a2e;color:rgba(255,255,255,.85);font-size:8px;line-height:20px;text-align:center;flex:none">MR</div><span style="margin-left:7px;font-size:14px;line-height:14px;color:#0a0a0a;letter-spacing:0.4px">8</span><span style="margin:0 6.5px 0 5.8px;width:1px;height:20px;background:#e5e5e5;flex:none"></span><span style="font-size:12px;line-height:12px;color:#71717a;letter-spacing:0.4px">6.75h</span></div>
<div class="b" style="left:896.2px;top:679.80px;width:108.4px;height:26px;border:1px solid #e6e6e6;border-radius:13px;background:#fff;display:flex;align-items:center;padding:0 0 0 1.5px;white-space:nowrap"><div style="width:20px;height:20px;border-radius:50%;background:radial-gradient(circle at 12% 55%,#ffd234 0%,rgba(255,210,52,0) 45%),radial-gradient(circle at 88% 82%,#ff6030 0%,rgba(255,96,48,0) 55%),#ff9a2e;color:rgba(255,255,255,.85);font-size:8px;line-height:20px;text-align:center;flex:none">SC</div><span style="margin-left:7px;font-size:14px;line-height:14px;color:#0a0a0a;letter-spacing:0.4px">12</span><span style="margin:0 6.5px 0 5.8px;width:1px;height:20px;background:#e5e5e5;flex:none"></span><span style="font-size:12px;line-height:12px;color:#71717a;letter-spacing:0.4px">11.25h</span></div>
<div class="b" style="left:1011.0px;top:679.80px;width:93.7px;height:26px;border:1px solid #e6e6e6;border-radius:13px;background:#fff;display:flex;align-items:center;padding:0 0 0 1.5px;white-space:nowrap"><div style="width:20px;height:20px;border-radius:50%;background:radial-gradient(circle at 22% 22%,#ffa634 0%,rgba(255,166,52,0) 50%),radial-gradient(circle at 85% 70%,#ff5228 0%,rgba(255,82,40,0) 55%),#ff7a2e;color:rgba(255,255,255,.85);font-size:8px;line-height:20px;text-align:center;flex:none">TB</div><span style="margin-left:7px;font-size:14px;line-height:14px;color:#0a0a0a;letter-spacing:0.4px">10</span><span style="margin:0 6.5px 0 5.8px;width:1px;height:20px;background:#e5e5e5;flex:none"></span><span style="font-size:12px;line-height:12px;color:#71717a;letter-spacing:0.4px">9.5h</span></div>
<div class="t" style="left:288.60px;top:763.66px;font-size:18px;line-height:18px;font-weight:700;color:#0a0a0a;letter-spacing:-0.15px;">Service Demand</div>
<svg class="i" style="left:1313px;top:764.6px;color:#8a8a8a;" width="16" height="16" viewBox="0 0 24 24" stroke-width="1.8"><path d="m15 18-6-6 6-6"/></svg>
<svg class="i" style="left:1353px;top:764.6px;color:#0a0a0a;" width="16" height="16" viewBox="0 0 24 24" stroke-width="1.8"><path d="m9 18 6-6-6-6"/></svg>
<div class="card" style="left:288.00px;top:806px;width:353.00px;height:200px"></div>
<div class="t" style="left:313.60px;top:836.86px;font-size:16px;line-height:16px;font-weight:700;color:#0a0a0a;letter-spacing:0.05px;">This Week</div>
<div class="t" style="left:313.60px;top:862.75px;font-size:14px;line-height:14px;font-weight:400;color:#71717a;letter-spacing:0.05px;">11 due · 10 scheduled</div>
<div class="b" style="left:509.00px;top:831px;width:107px;height:32px;border-radius:8px;background:#ff6900"></div>
<div class="t" style="left:519.80px;top:840.95px;font-size:14px;line-height:14px;font-weight:400;color:#fff;letter-spacing:0.4px;-webkit-text-stroke:0.45px #fff">Add route</div>
<svg class="i" style="left:589.4px;top:839px;color:#fff;" width="16" height="16" viewBox="0 0 24 24" stroke-width="1.6"><path d="m6 9 6 6 6-6"/></svg>
<div class="card" style="left:657.00px;top:806px;width:353.00px;height:200px"></div>
<div class="t" style="left:682.60px;top:836.86px;font-size:16px;line-height:16px;font-weight:700;color:#0a0a0a;letter-spacing:0.05px;">Next Week</div>
<div class="t" style="left:682.60px;top:862.75px;font-size:14px;line-height:14px;font-weight:400;color:#71717a;letter-spacing:0.05px;">20 due · 19 scheduled</div>
<div class="b" style="left:878.00px;top:831px;width:107px;height:32px;border-radius:8px;background:#ff6900"></div>
<div class="t" style="left:888.80px;top:840.95px;font-size:14px;line-height:14px;font-weight:400;color:#fff;letter-spacing:0.4px;-webkit-text-stroke:0.45px #fff">Add route</div>
<svg class="i" style="left:958.4px;top:839px;color:#fff;" width="16" height="16" viewBox="0 0 24 24" stroke-width="1.6"><path d="m6 9 6 6 6-6"/></svg>
<div class="card" style="left:1026.00px;top:806px;width:353.00px;height:200px"></div>
<div class="t" style="left:1051.60px;top:836.86px;font-size:16px;line-height:16px;font-weight:700;color:#0a0a0a;letter-spacing:0.05px;">Mar 30–Apr 5</div>
<div class="t" style="left:1051.60px;top:862.75px;font-size:14px;line-height:14px;font-weight:400;color:#71717a;letter-spacing:0.05px;">9 due · 9 scheduled</div>
<div class="b" style="left:1247.00px;top:831px;width:107px;height:32px;border-radius:8px;background:#ff6900"></div>
<div class="t" style="left:1257.80px;top:840.95px;font-size:14px;line-height:14px;font-weight:400;color:#fff;letter-spacing:0.4px;-webkit-text-stroke:0.45px #fff">Add route</div>
<svg class="i" style="left:1327.4px;top:839px;color:#fff;" width="16" height="16" viewBox="0 0 24 24" stroke-width="1.6"><path d="m6 9 6 6 6-6"/></svg>
<div class="b" style="left:1411px;top:0;width:15px;height:889px;background:#fafafa;border-left:1px solid #ececec"></div>
<div class="b" style="left:1415px;top:3px;width:8px;height:711px;border-radius:4px;background:#c1c1c1"></div>
</body></html>
